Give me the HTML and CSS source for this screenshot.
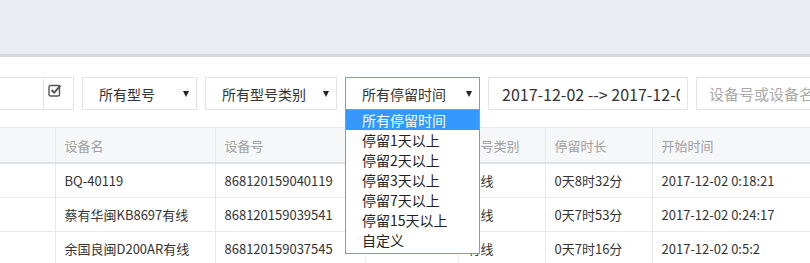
FILE: index.html
```html
<!DOCTYPE html>
<html lang="zh-CN">
<head>
  <meta charset="UTF-8" />
  <title>停留设备</title>
  <link rel="stylesheet" href="styles.css">
</head>
<body>

<div class="topbar"></div>

<div class="content">
  <div class="toolbar">
    <div class="keyword"></div>
    <div class="check">
      <svg width="14" height="14" viewBox="0 0 14 14">
        <rect x="1" y="2.5" width="10.5" height="10.5" rx="1.5" fill="none" stroke="#555" stroke-width="1.4"/>
        <path d="M3.5 7 L6.2 9.7 L12.5 2.5" fill="none" stroke="#555" stroke-width="1.9"/>
      </svg>
    </div>
    <div class="select s1">所有型号<span class="arrow"></span></div>
    <div class="select s2">所有型号类别<span class="arrow"></span></div>
    <div class="select s3 open">所有停留时间<span class="arrow"></span>
      <ul class="options">
        <li class="on">所有停留时间</li>
        <li>停留1天以上</li>
        <li>停留2天以上</li>
        <li>停留3天以上</li>
        <li>停留7天以上</li>
        <li>停留15天以上</li>
        <li>自定义</li>
      </ul>
    </div>
    <div class="date"><span>2017-12-02 --&gt; 2017-12-02 23:59</span></div>
    <div class="search">设备号或设备名</div>
  </div>

  <table class="grid">
    <colgroup>
      <col style="width:55px">
      <col style="width:160px">
      <col style="width:150px">
      <col style="width:93px">
      <col style="width:87px">
      <col style="width:107px">
      <col>
    </colgroup>
    <thead>
      <tr>
        <th></th>
        <th>设备名</th>
        <th>设备号</th>
        <th></th>
        <th>型号类别</th>
        <th>停留时长</th>
        <th>开始时间</th>
      </tr>
    </thead>
    <tbody>
      <tr>
        <td></td>
        <td>BQ-40119</td>
        <td>868120159040119</td>
        <td></td>
        <td>有线</td>
        <td>0天8时32分</td>
        <td>2017-12-02 0:18:21</td>
      </tr>
      <tr>
        <td></td>
        <td>蔡有华闽KB8697有线</td>
        <td>868120159039541</td>
        <td></td>
        <td>有线</td>
        <td>0天7时53分</td>
        <td>2017-12-02 0:24:17</td>
      </tr>
      <tr>
        <td></td>
        <td>余国良闽D200AR有线</td>
        <td>868120159037545</td>
        <td></td>
        <td>有线</td>
        <td>0天7时16分</td>
        <td>2017-12-02 0:5:2</td>
      </tr>
    </tbody>
  </table>
</div>

</body>
</html>
```

FILE: styles.css
```css
body {
  margin: 0;
  font-family: "Noto Sans CJK SC", "Noto Sans", sans-serif;
  color: #333;
  background: #fff;
  overflow: hidden;
}

.topbar {
  height: 54px;
  background: #ebedf5;
  border-bottom: 3px solid #d5d7dd;
}

.content {
  padding-top: 20px;
}

.toolbar {
  display: flex;
  height: 33px;
  font-size: 14px;
  white-space: nowrap;
}

.toolbar > div {
  flex-shrink: 0;
  box-sizing: border-box;
  height: 33px;
  border: 1px solid #e4e4e4;
  display: flex;
  align-items: center;
  background: #fff;
}

.toolbar .keyword {
  width: 43px;
  border-left: none;
  border-right: none;
}

.toolbar .check {
  width: 31px;
  padding-left: 4px;
  align-items: flex-start;
  padding-top: 5px;
}

.toolbar .select {
  position: relative;
  margin-left: 8px;
  padding-left: 16px;
}

.s1 { width: 115px; }
.s2 { width: 132px; margin-left: 9px; }
.s3 { width: 135px; }

.toolbar .select.open {
  border-color: #7f9db9;
}

.arrow {
  position: absolute;
  right: 7px;
  top: 13px;
  border-left: 3px solid transparent;
  border-right: 3px solid transparent;
  border-top: 6px solid #222;
}

.options {
  position: absolute;
  left: -1px;
  top: 31px;
  width: 135px;
  box-sizing: border-box;
  margin: 0;
  padding: 0 0 3px;
  list-style: none;
  background: #fff;
  border: 1px solid #7f9db9;
  z-index: 2;
}

.options li {
  height: 20px;
  line-height: 20px;
  padding-left: 16px;
  font-size: 14px;
  color: #222;
}

.options li.on {
  background: #3399ff;
  color: #fff;
}

.toolbar .date {
  width: 200px;
  margin-left: 8px;
  padding: 0 6px 0 13px;
  font-size: 16px;
}

.date span {
  display: block;
  width: 178px;
  overflow: hidden;
}

.toolbar .search {
  width: 130px;
  margin-left: 8px;
  padding-left: 12px;
  font-size: 15px;
  color: #aaa;
}

.grid {
  margin-top: 17px;
  width: 820px;
  border-collapse: collapse;
  table-layout: fixed;
  font-size: 13px;
}

.grid th,
.grid td {
  text-align: left;
  padding: 0 9px;
  border-left: 1px solid #e8e9ec;
  border-top: 1px solid #e8e9ec;
  white-space: nowrap;
  overflow: hidden;
}

.grid th:first-child,
.grid td:first-child {
  border-left: none;
}

.grid th {
  height: 34px;
  background: #f6f7f9;
  color: #a0a0a0;
  font-weight: normal;
  border-bottom: 2px solid #e2e3e6;
}

.grid td {
  height: 33px;
  color: #333;
}
```
